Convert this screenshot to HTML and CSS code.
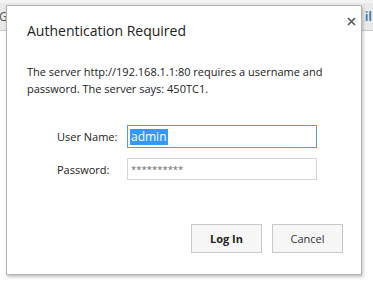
FILE: index.html
```html
<!DOCTYPE html>
<html lang="en">
<head>
    <meta charset="UTF-8">
    <title>Authentication Required</title>
    <link rel="stylesheet" href="styles.css">
</head>
<body>
    <div class="browser">
        <div class="tabbar">
            <span class="tab-left">G</span>
            <span class="tab-right">il</span>
        </div>
    </div>
    <div class="dialog">
        <div class="dlg-head">
            <h1>Authentication Required</h1>
            <svg class="close" width="9" height="9" viewBox="0 0 9 9"><path d="M1 1L8 8M8 1L1 8" stroke="#5a5a5a" stroke-width="1.7"/></svg>
        </div>
        <p class="msg">The server http://192.168.1.1:80 requires a username and password. The server says: 450TC1.</p>
        <div class="form">
            <label>User Name:</label>
            <div class="field focus"><span class="sel">admin</span></div>
            <label>Password:</label>
            <div class="field pw"><span class="dots">**********</span></div>
        </div>
        <div class="buttons">
            <button class="btn primary">Log In</button>
            <button class="btn">Cancel</button>
        </div>
    </div>
</body>
</html>
```

FILE: styles.css
```css
body { margin:0; background:#fff; font-family: 'Open Sans', 'Noto Sans', Arial, sans-serif; color:#222; width:373px; height:283px; overflow:hidden; position:relative; }
.browser { border-top:3px solid #f3f3f3; }
.tabbar { height:27px; background:#e9e9e9; border-bottom:1px solid #c9c9c9; display:flex; justify-content:space-between; align-items:center; font-size:12px; }
.tab-left { color:#555; margin-left:-1px; }
.tab-right { color:#4a7fb5; margin-right:1px; font-weight:700; }
.dialog { position:absolute; left:6px; top:5px; width:354px; height:268px; background:#fff; border:1px solid #b5b5b5; box-shadow:1px 2px 3px rgba(0,0,0,0.25); }
.dlg-head { display:flex; justify-content:space-between; align-items:flex-start; padding:15px 5px 0 20px; }
h1 { margin:0; font-size:14px; font-weight:400; color:#222; line-height:20px; }
.close { margin-top:-4px; }
.msg { margin:22px 20px 0 20px; font-size:11px; line-height:17px; color:#222; }
.form { display:grid; grid-template-columns:70px 190px; row-gap:10px; align-items:center; margin:28px 0 0 50px; font-size:11px; }
.form label { color:#222; }
.field { border:1px solid #d5d5d5; box-sizing:border-box; height:23px; display:flex; align-items:center; padding-left:2px; }
.field.pw { height:22px; }
.field.focus { border-color:#5b9bd5; }
.sel { background:#3399ff; color:#fff; font-size:12px; line-height:16px; padding:0 1px; }
.dots { color:#666; font-size:9.5px; margin-left:1px; }
.buttons { display:flex; justify-content:flex-end; gap:10px; margin:44px 18px 0 0; }
.btn { width:71px; height:29px; background:#f6f6f6; border:1px solid #c9c9c9; font-family:inherit; font-size:11px; color:#333; padding:0; }
.btn.primary { font-weight:700; color:#222; }
```
